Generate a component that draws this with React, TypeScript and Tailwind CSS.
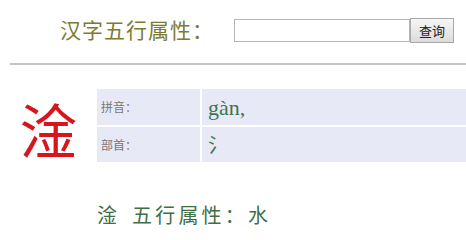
export default function App() {
  const cjk = { fontFamily: '"Noto Sans CJK SC", sans-serif' };
  return (
    <div className="w-[466px] h-[240px] bg-white overflow-hidden" style={cjk}>
      <div className="flex items-center h-[58px] pl-[60px]">
        <h1 className="text-[21px] leading-none text-[#7d7a32] tracking-[1px]">汉字五行属性：</h1>
        <div className="flex items-center ml-[20px] mt-[2px]">
          <input className="w-[176px] h-[23px] border border-[#b5b5b5] bg-white outline-none" />
          <button className="w-[44px] h-[25px] border border-[#a9a9a9] bg-gradient-to-b from-[#f6f6f6] to-[#dcdcdc] text-[13px] text-[#222] leading-none">
            查询
          </button>
        </div>
      </div>
      <div className="ml-[10px] mt-[5px] h-[2px] bg-[#c4c4c4]" />

      <div className="flex mt-[24px]">
        <div className="w-[97px] flex items-center justify-center">
          <span className="text-[58px] leading-none text-[#d8141c] mt-[4px]">淦</span>
        </div>
        <div className="flex-1 flex flex-col gap-[2px]">
          <div className="flex h-[36px] gap-[2px]">
            <div className="w-[103px] bg-[#e7eaf6] flex items-center pl-[4px] text-[12px] text-[#777]">拼音：</div>
            <div className="flex-1 bg-[#e7eaf6] flex items-center pl-[6px] text-[22px] text-[#3e7450]" style={{ fontFamily: '"Liberation Serif", serif' }}>gàn,</div>
          </div>
          <div className="flex h-[35px] gap-[2px]">
            <div className="w-[103px] bg-[#e7eaf6] flex items-center pl-[4px] text-[12px] text-[#777]">部首：</div>
            <div className="flex-1 bg-[#e7eaf6] flex items-center pl-[6px] text-[20px] text-[#3e7450]">氵</div>
          </div>
        </div>
      </div>

      <div className="flex pl-[97px] mt-[43px] text-[20px] leading-none text-[#3f6f45]">
        <span className="mr-[15px]">淦</span>
        <span className="tracking-[3.2px]">五行属性：水</span>
      </div>
    </div>
  );
}
